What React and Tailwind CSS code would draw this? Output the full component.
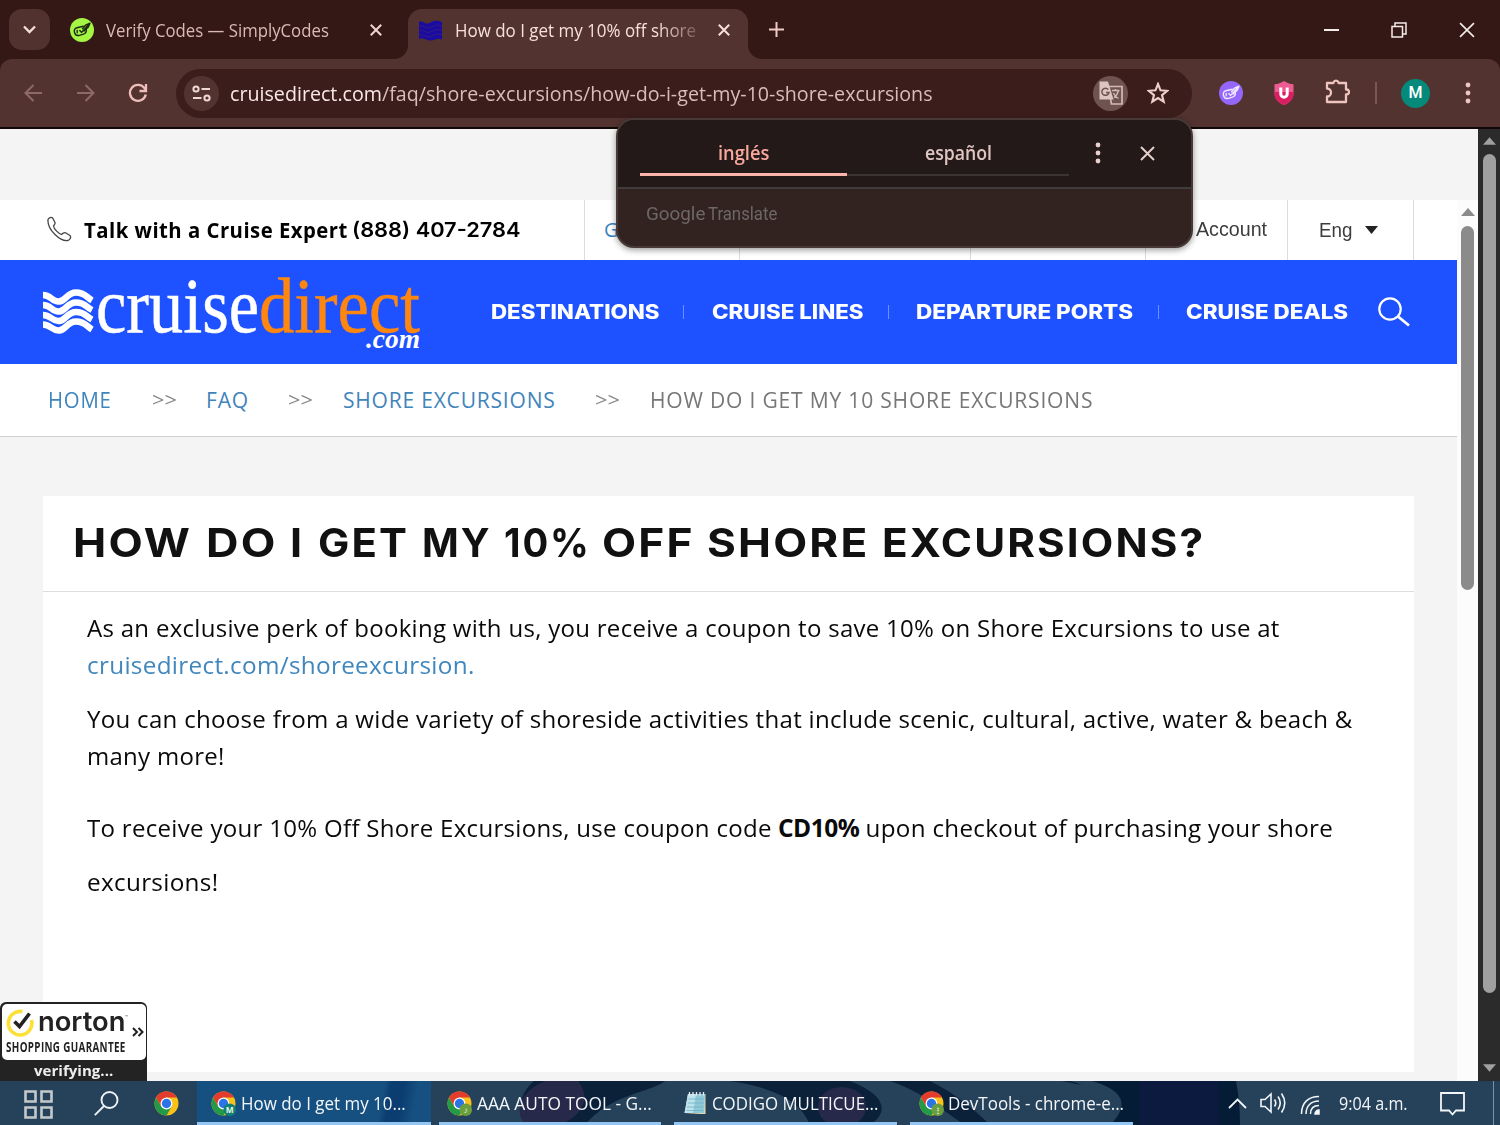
import React, { useLayoutEffect, useRef } from "react";

const UI = "font-['Open_Sans','Noto_Sans',sans-serif]";

/* A single line of text, scaled horizontally to fill the width of its box. */
function Fit({ className = "", children }) {
  const box = useRef(null);
  const text = useRef(null);
  useLayoutEffect(() => {
    const fit = () => {
      const natural = text.current.offsetWidth;
      if (natural) {
        text.current.style.transform = `scaleX(${box.current.clientWidth / natural})`;
      }
    };
    fit();
    document.fonts?.ready.then(fit);
  }, []);
  return (
    <span ref={box} className={`block shrink-0 whitespace-nowrap ${className}`}>
      <span ref={text} className="inline-block origin-left">
        {children}
      </span>
    </span>
  );
}

function Cross({ size, className = "", w = 2 }) {
  return (
    <svg width={size} height={size} viewBox="0 0 12 12" className={`shrink-0 ${className}`} fill="none" stroke="currentColor" strokeWidth={w}>
      <path d="M.8.8 11.2 11.2M11.2.8.8 11.2" />
    </svg>
  );
}

function Dots({ className = "" }) {
  return (
    <svg width="6" height="22" viewBox="0 0 6 22" fill="currentColor" className={`shrink-0 ${className}`}>
      <circle cx="3" cy="3" r="2.4" />
      <circle cx="3" cy="11" r="2.4" />
      <circle cx="3" cy="19" r="2.4" />
    </svg>
  );
}

function SimplyIcon({ bg, fg }) {
  return (
    <svg width="24" height="24" viewBox="0 0 24 24" className="shrink-0" fill="none" stroke={fg} strokeWidth="1.4" strokeLinecap="round" strokeLinejoin="round">
      <circle cx="12" cy="12" r="12" fill={bg} stroke="none" />
      <path d="M13.2 8.2 7 9.700C4.500 10.300 3.900 12.500 4.500 14.500 5.200 17 7 18 9.500 17.400L13.500 16.200C16 15.300 16.600 12.800 16 10.800" />
      <path d="m9.800 12.600 1.800 1.800 6.600-7.400M12.500 10.800 15.500 7.200 20 5.200 18.200 9.200 14 13" />
      <path d="M7.200 12.500v2.300" />
    </svg>
  );
}

function ChromeIcon({ badge, label }) {
  return (
    <svg width="25" height="25" viewBox="0 0 24 24" className="shrink-0">
      <circle cx="12" cy="12" r="11.500" fill="#fbc116" />
      <path d="M2.040 6.250A11.500 11.500 0 0 0 12 23.500L17 14.900 7 14.900z" fill="#229a48" />
      <path d="M2.040 6.250A11.500 11.500 0 0 1 21.960 6.250H12L7 14.900z" fill="#e33b2e" />
      <circle cx="12" cy="12" r="5.700" fill="#fff" />
      <circle cx="12" cy="12" r="4.500" fill="#2a74e8" />
      {badge && <circle cx="18" cy="18" r="6" fill={badge} />}
      {badge && (
        <text x="18" y="21" textAnchor="middle" fontSize="8" fontWeight="700" fill="#e6f5e0" fontFamily="Open Sans">
          {label}
        </text>
      )}
    </svg>
  );
}

function TabStrip() {
  return (
    <div className="flex h-[59px] items-start bg-[#331815]">
      <div className="ml-[9px] mt-[9px] flex h-[41px] w-[41px] shrink-0 items-center justify-center rounded-[13px] bg-[#51322f]">
        <svg width="13" height="9" viewBox="0 0 13 9" fill="none" stroke="#f6dedb" strokeWidth="2.300">
          <path d="M1 1.500 6.500 7 12 1.500" />
        </svg>
      </div>
      <div className="ml-5 flex h-[60px] w-[338px] shrink-0 items-center text-[#dcb9b4]">
        <SimplyIcon bg="#a4f544" fg="#1d2b12" />
        <Fit className="ml-3 w-[223px] text-[18.500px] leading-6">Verify Codes — SimplyCodes</Fit>
        <Cross size={12} className="ml-[41px] text-[#f1d5d1]" />
      </div>
      <div className="relative mt-[9px] flex h-[50px] w-[340px] shrink-0 items-center rounded-t-[14px] bg-[#523330] pb-[8px] text-[#f7dfdc]">
        <svg className="absolute -left-[14px] bottom-0" width="14" height="14">
          <path d="M14 0V14H0A14 14 0 0 0 14 0z" fill="#523330" />
        </svg>
        <svg className="absolute -right-[14px] bottom-0" width="14" height="14">
          <path d="M0 0V14H14A14 14 0 0 1 0 0z" fill="#523330" />
        </svg>
        <svg width="24" height="21" viewBox="0 0 24 21" className="ml-[11px] shrink-0">
          <path d="M0 2C4 0 5 4.500 9 3.500S15-1 23 2V19.500C17 17 16 21 11 20.500S4 17 0 19z" fill="#1a0ca0" />
          <path d="M0 6C6 5 6 9 11 7.500S17 4 23 6M0 10.500C6 9.500 6 13.500 11 12S17 8.500 23 10.500M0 15C6 14 6 18 11 16.500S17 13 23 15" fill="none" stroke="#3a2178" strokeWidth=".8" />
        </svg>
        <Fit className="ml-3 w-[241px] text-[18.500px] leading-6 [mask-image:linear-gradient(90deg,#000_84%,rgba(0,0,0,0.25))]">
          How do I get my 10% off shore
        </Fit>
        <Cross size={12} className="ml-[22px]" />
      </div>
      <svg width="15" height="15" viewBox="0 0 15 15" className="ml-[21px] mt-[22px] shrink-0" stroke="#efc9c4" strokeWidth="2">
        <path d="M7.500 0V15M0 7.500H15" />
      </svg>
      <div className="ml-auto mr-[25px] mt-[22px] flex h-4 items-center text-[#f5ece9]">
        <div className="h-[2px] w-[15px] bg-[#f5ece9]" />
        <svg width="16" height="16" viewBox="0 0 16 16" className="ml-[52px]" fill="none" stroke="currentColor" strokeWidth="1.500">
          <path d="M1 4.500H11.500V15H1zM4 4.500V1H15V12H11.500" />
        </svg>
        <Cross size={16} w={1.2} className="ml-[52px]" />
      </div>
    </div>
  );
}

function Toolbar() {
  return (
    <div className="h-[70px] bg-[#331815]">
      <div className="flex h-full items-center rounded-t-[12px] border-b-2 border-[#100806] bg-[#523330]">
        <svg width="18" height="18" viewBox="0 0 18 18" className="ml-6 shrink-0" fill="none" stroke="#8d6a67" strokeWidth="2">
          <path d="M18 9H2M9.500 1 1.500 9l8 8" />
        </svg>
        <svg width="18" height="18" viewBox="0 0 18 18" className="ml-[35px] shrink-0" fill="none" stroke="#8d6a67" strokeWidth="2">
          <path d="M0 9H16M8.500 1l8 8-8 8" />
        </svg>
        <svg width="20" height="20" viewBox="0 0 20 20" className="ml-[33px] shrink-0" fill="none" stroke="#eebfba" strokeWidth="2.300">
          <path d="M17.800 11.500A8 8 0 1 1 16.500 5.200L18 7" />
          <path d="M18 1v7h-6.500" />
        </svg>
        <div className="ml-[28px] flex h-[49px] w-[1016px] shrink-0 items-center rounded-full bg-[#3b1e1c]">
          <div className="ml-2 flex size-[35px] items-center justify-center rounded-full bg-[#523330]">
            <svg width="19" height="17" viewBox="0 0 19 17" fill="none" stroke="#f0d8d5" strokeWidth="2">
              <circle cx="4" cy="4" r="2.600" />
              <circle cx="15" cy="13" r="2.600" />
              <path d="M9.500 4H18M1 13H9.500" />
            </svg>
          </div>
          <Fit className="ml-[11px] w-[703px] text-[20.500px] leading-7 text-[#d9bdba]">
            <span className="text-[#fbe9e7]">cruisedirect.com</span>/faq/shore-excursions/how-do-i-get-my-10-shore-excursions
          </Fit>
          <div className="ml-[160px] flex size-[35px] shrink-0 items-center justify-center rounded-full bg-[#6f5351]">
            <svg width="26" height="26" viewBox="0 0 26 26">
              <path d="M10 6.500H24V24H13.500z" fill="none" stroke="#d3bab7" strokeWidth="1.700" />
              <path d="M1.500 1.500H10L15.500 19.500H1.500z" fill="#dcc4c1" />
              <path d="M10.300 9.500A3.600 3.600 0 1 0 11 12.500H8" fill="none" stroke="#6f5351" strokeWidth="1.500" />
              <path d="M14 10.500h7.500M17.500 9v1.500M20.500 10.500c-1 4-3 6-4.500 7M15.500 13c1 2.500 3 4.500 5 5.500" fill="none" stroke="#d3bab7" strokeWidth="1.300" />
            </svg>
          </div>
          <svg width="22" height="22" viewBox="0 0 22 22" className="ml-[19px] shrink-0" fill="none" stroke="#f0cfcb" strokeWidth="2.100">
            <path d="m11 2 2.500 6.300 6.700.5-5.200 4.300 1.700 6.600L11 16.100l-5.700 3.600L7 13.100 1.800 8.800l6.700-.5z" />
          </svg>
        </div>
        <div className="ml-[27px] shrink-0">
          <SimplyIcon bg="#9467fa" fg="#efe6ff" />
        </div>
        <svg width="20" height="24" viewBox="0 0 20 24" className="ml-[31px] shrink-0">
          <path d="M10 0C13 2 16 3 19.500 3.200V13C19.500 18 15 22 10 24 5 22 .5 18 .5 13V3.200C4 3 7 2 10 0z" fill="#ee5a92" />
          <path d="M.5 11H19.500V13C19.500 18 15 22 10 24 5 22 .5 18 .5 13z" fill="#d91f62" />
          <path d="M6.800 6.500V13a3.200 3.200 0 0 0 6.400 0V6.500" fill="none" stroke="#fff" strokeWidth="3" />
        </svg>
        <svg width="26" height="26" viewBox="0 0 26 26" className="ml-[30px] mt-[-4px] shrink-0" fill="none" stroke="#efc4bf" strokeWidth="2.300" strokeLinejoin="round">
          <path d="M3 5H9.500V4.500a2.600 2.500 0 0 1 5 0V5H22V11.500h.5a2.500 2.500 0 0 1 0 5H22V24H3V18.500a4 4 0 0 0 0-8z" />
        </svg>
        <div className="ml-[25px] h-[22px] w-[2px] shrink-0 bg-[#7d5552]" />
        <div className="ml-6 flex size-[29px] shrink-0 items-center justify-center rounded-full bg-[#04897b] font-[Roboto,sans-serif] text-[16px] font-medium text-white">
          M
        </div>
        <Dots className="ml-[35px] text-[#efc4bf]" />
      </div>
    </div>
  );
}

function TranslatePopup() {
  return (
    <div className="absolute left-[616px] top-[118px] z-20 h-[130px] w-[577px] overflow-hidden rounded-[18px] border-2 border-[#483936] bg-[#322321] shadow-[0_2px_6px_rgba(0,0,0,0.4)]">
      <div className="flex h-[69px] items-start border-b-2 border-[#403c3e] bg-[#231918] pl-[22px] font-semibold">
        <div className="flex h-[56px] w-[207px] items-center justify-center border-b-[3px] border-[#fbb4aa] pt-[13px] text-[#f9a79c]">
          <Fit className="w-[51px] text-[19px] leading-7">inglés</Fit>
        </div>
        <div className="flex h-[56px] w-[222px] items-center justify-center border-b-2 border-[#3b3334] pt-[12px] text-[#e0c5c1]">
          <Fit className="w-[67px] text-[19px] leading-7">español</Fit>
        </div>
        <Dots className="ml-[26px] mt-[22px] text-[#e8d0cc]" />
        <Cross size={15} w={1.500} className="ml-[39px] mt-[26px] text-[#e8d0cc]" />
      </div>
      <div className="flex pl-7 pt-[13px] font-[Roboto,sans-serif] text-[#6d6766]">
        <Fit className="w-[59px] text-[18.500px] leading-6">Google</Fit>
        <Fit className="ml-[3px] w-[69px] text-[17.500px] leading-6">Translate</Fit>
      </div>
    </div>
  );
}

function TopBar() {
  return (
    <div className="flex h-[60px] w-[1457px] items-stretch bg-white">
      <div className="flex w-[584px] shrink-0 items-center">
        <svg width="26" height="26" viewBox="0 0 26 26" className="mb-[2px] ml-[46px] shrink-0" fill="none" stroke="#444" strokeWidth="1.300" strokeLinejoin="round">
          <path d="M2 3.500C3 1.500 5.500.8 6.800 2.200L9 6.500C9.500 8 8.500 9 7.500 10 8 13 12 17.200 15.500 18.500 17 17 18 16.200 19.500 16.800L24 19.500C25.300 21 24.300 23.500 22 24.500 15 26 1 14 2 3.500z" />
        </svg>
        <div className="ml-3 flex items-center font-bold text-black">
          <Fit className="w-[264px] text-[21px] leading-7 tracking-[0.5px]">Talk with a Cruise Expert</Fit>
          <Fit className="ml-[4px] w-[169px] font-[Inter,sans-serif] text-[20px] font-semibold leading-7">(888) 407-2784</Fit>
        </div>
      </div>
      <div className="flex w-[155px] shrink-0 items-center border-l border-[#dcdcdc] pl-[19px] text-[20px] text-[#3a85c0]">G</div>
      <div className="w-[231px] shrink-0 border-l border-[#dcdcdc]" />
      <div className="w-[175px] shrink-0 border-l border-[#dcdcdc]" />
      <div className="flex w-[142px] shrink-0 items-center justify-end border-l border-[#dcdcdc] pb-[2px] pr-[20px] text-[#3c3c3c]">
        <Fit className="w-[71px] font-['Liberation_Sans',sans-serif] text-[20.500px] leading-7">Account</Fit>
      </div>
      <div className="flex w-[126px] shrink-0 items-center border-l border-[#dcdcdc] pl-[31px] text-[#3c3c3c]">
        <Fit className="w-[33px] font-['Liberation_Sans',sans-serif] text-[20.500px] leading-7">Eng</Fit>
        <svg width="13" height="8" viewBox="0 0 13 8" className="ml-[13px]">
          <path d="M0 0H13L6.500 8z" fill="#222" />
        </svg>
      </div>
      <div className="grow border-l border-[#dcdcdc]" />
    </div>
  );
}

function Logo() {
  return (
    <svg width="380" height="104" viewBox="0 0 380 104" className="ml-[42px] shrink-0 overflow-visible">
      <g fill="none" stroke="#fff" strokeWidth="6.400">
        <path d="M1 35C9 35 10 42 17 41.500S25 32.500 34 32.500 44 37 50 40.500" />
        <path d="M1 45C9 45 10 52 17 51.500S25 42.500 34 42.500 44 47 50 50" />
        <path d="M1 55C9 55 10 61.500 17 61S25 52 34 52 44 56.500 50 59.500" />
        <path d="M1 64.500C9 64.500 10 71 17 70.500S25 61.500 34 61.500 44 66 50 69.500" />
      </g>
      <g fontFamily="Liberation Serif" fontSize="78" strokeWidth=".5">
        <text x="54" y="71.500" textLength="163" lengthAdjust="spacingAndGlyphs" fill="#fff" stroke="#fff">
          cruise
        </text>
        <text x="217" y="71.500" textLength="161" lengthAdjust="spacingAndGlyphs" fill="#ff870f" stroke="#ff870f">
          direct
        </text>
      </g>
      <text x="324" y="88" textLength="54" lengthAdjust="spacingAndGlyphs" fontFamily="Liberation Serif" fontStyle="italic" fontWeight="700" fontSize="28" fill="#fff">
        .com
      </text>
    </svg>
  );
}

function MainNav() {
  const item = "font-[Inter,sans-serif] text-[19.500px] font-extrabold leading-7 text-white";
  const bar = "h-[14px] w-px shrink-0 bg-[#6f90ff]";
  return (
    <div className="flex h-[104px] w-[1457px] items-center bg-[#1e51ff]">
      <Logo />
      <Fit className={`ml-[69px] w-[168px] ${item}`}>DESTINATIONS</Fit>
      <div className={`ml-[24px] ${bar}`} />
      <Fit className={`ml-[28px] w-[151px] ${item}`}>CRUISE LINES</Fit>
      <div className={`ml-[25px] ${bar}`} />
      <Fit className={`ml-[27px] w-[217px] ${item}`}>DEPARTURE PORTS</Fit>
      <div className={`ml-[25px] ${bar}`} />
      <Fit className={`ml-[27px] w-[162px] ${item}`}>CRUISE DEALS</Fit>
      <svg width="32" height="30" viewBox="0 0 32 30" className="ml-[30px] shrink-0" fill="none" stroke="#fff" strokeWidth="2.200">
        <circle cx="12" cy="12" r="10.700" />
        <path d="m20 19.500 11 9" strokeWidth="2.800" />
      </svg>
    </div>
  );
}

function Breadcrumb() {
  const t = "text-[21px] leading-7 tracking-[0.8px]";
  const sep = "w-[25px] text-[20px] leading-7 text-[#888]";
  return (
    <div className="flex h-[73px] w-[1457px] items-center border-b border-[#cfcfcf] bg-white pb-px">
      <Fit className={`ml-[48px] w-[64px] text-[#3f84bb] ${t}`}>HOME</Fit>
      <Fit className={`ml-[40px] ${sep}`}>&gt;&gt;</Fit>
      <Fit className={`ml-[29px] w-[43px] text-[#3f84bb] ${t}`}>FAQ</Fit>
      <Fit className={`ml-[39px] ${sep}`}>&gt;&gt;</Fit>
      <Fit className={`ml-[30px] w-[213px] text-[#3f84bb] ${t}`}>SHORE EXCURSIONS</Fit>
      <Fit className={`ml-[39px] ${sep}`}>&gt;&gt;</Fit>
      <Fit className={`ml-[30px] w-[443px] text-[#777] ${t}`}>HOW DO I GET MY 10 SHORE EXCURSIONS</Fit>
    </div>
  );
}

function Article() {
  return (
    <div className="ml-[43px] mt-[59px] h-[576px] w-[1371px] bg-white">
      <h1 className="flex h-[96px] items-center border-b border-[#dedede] pb-px pl-[30px] font-[Inter,sans-serif] text-[40px] font-bold leading-[50px] tracking-[2px] text-[#111]">
        <Fit className="w-[119px]">HOW</Fit>
        <Fit className="ml-[14px] w-[72px]">DO</Fit>
        <Fit className="ml-[12px] w-[14px]">I</Fit>
        <Fit className="ml-[14px] w-[91px]">GET</Fit>
        <Fit className="ml-[13px] w-[70px]">MY</Fit>
        <Fit className="ml-[12px] w-[87px]">10%</Fit>
        <Fit className="ml-[11px] w-[93px]">OFF</Fit>
        <Fit className="ml-[12px] w-[162px]">SHORE</Fit>
        <Fit className="ml-[13px] w-[323px]">EXCURSIONS?</Fit>
      </h1>
      <div className="pl-[44px] pt-[17px] text-[24.500px] leading-[37px] tracking-[0.300px] text-[#0a0a0a]">
        <Fit className="w-[1193px]">As an exclusive perk of booking with us, you receive a coupon to save 10% on Shore Excursions to use at</Fit>
        <Fit className="w-[388px] text-[#4087be]">cruisedirect.com/shoreexcursion.</Fit>
        <Fit className="mt-[17px] w-[1266px]">
          You can choose from a wide variety of shoreside activities that include scenic, cultural, active, water &amp; beach &amp;
        </Fit>
        <Fit className="w-[138px]">many more!</Fit>
        <div className="mt-[35px] flex">
          <Fit className="w-[691px]">To receive your 10% Off Shore Excursions, use coupon code&nbsp;</Fit>
          <Fit className="w-[81px] font-bold tracking-[-0.500px]">CD10%</Fit>
          <Fit className="w-[474px]">&nbsp;upon checkout of purchasing your shore</Fit>
        </div>
        <Fit className="mt-[17px] w-[131px]">excursions!</Fit>
      </div>
    </div>
  );
}

function InnerScrollbar() {
  return (
    <div className="flex w-[21px] flex-col items-center bg-[#fcfcfc] pt-[8px]">
      <svg width="14" height="8" viewBox="0 0 14 8" className="shrink-0">
        <path d="M7 0 14 8H0z" fill="#8b8b8b" />
      </svg>
      <div className="mt-[10px] h-[364px] w-[13px] shrink-0 rounded-full bg-[#8b8b8b]" />
    </div>
  );
}

function OuterScrollbar() {
  return (
    <div className="flex w-[22px] shrink-0 flex-col items-center bg-[#2b2b2b] pt-[8px]">
      <svg width="13" height="8" viewBox="0 0 14 8" className="shrink-0">
        <path d="M7 0 14 8H0z" fill="#a0a0a0" />
      </svg>
      <div className="mt-[9px] h-[839px] w-[13px] shrink-0 rounded-full bg-[#a0a0a0]" />
      <svg width="13" height="8" viewBox="0 0 14 8" className="mb-[9px] mt-auto shrink-0">
        <path d="M0 0H14L7 8z" fill="#a0a0a0" />
      </svg>
    </div>
  );
}

function NortonBadge() {
  return (
    <div className="absolute bottom-0 left-0 h-[79px] w-[147px] rounded-t-[6px] bg-[#232323] pl-[2px] pr-px pt-[2px]">
      <div className="flex h-[56px] items-center rounded-[5px] bg-white pl-[4px]">
        <div className="w-[121px]">
          <div className="flex items-center">
            <svg width="28" height="28" viewBox="0 0 28 28" className="shrink-0" fill="none">
              <path d="M16.500 2.600A11.800 11.800 0 1 0 25.500 11" stroke="#fbe137" strokeWidth="3.600" />
              <path d="m8.500 12.500 5 5L23.500 4.500" stroke="#222" strokeWidth="3.600" />
            </svg>
            <Fit className="ml-[4px] mt-[-2px] w-[87px] font-[Inter,sans-serif] text-[27px] font-semibold leading-[26px] text-[#222]">norton</Fit>
            <span className="mt-[-12px] text-[4px] leading-3 text-[#555]">™</span>
          </div>
          <Fit className="mt-[2px] w-[120px] text-[13.500px] font-bold leading-[17px] tracking-[0.500px] text-[#222]">SHOPPING GUARANTEE</Fit>
        </div>
        <svg width="12" height="10" viewBox="0 0 12 10" className="ml-[5px] shrink-0" fill="none" stroke="#222" strokeWidth="2">
          <path d="m1 1 4 4-4 4M6.500 1l4 4-4 4" />
        </svg>
      </div>
      <div className="flex h-[21px] items-center justify-center pr-[2px]">
        <Fit className="w-[79px] text-[14.500px] font-bold leading-5 text-[#eee]">verifying...</Fit>
      </div>
    </div>
  );
}

function NotepadIcon() {
  return (
    <svg width="25" height="25" viewBox="0 0 25 25" className="shrink-0">
      <path d="M5 3.500 22.500 3V23H17L2 22z" fill="#e3d7b4" />
      <path d="M5 3H22L21 22H1.500z" fill="#8fc9d8" />
      <path d="M5 3H13L10 22H1.500z" fill="#bfe3eb" />
      <path d="M5.500 8H20.500M5 12H20.500M4 16H20M3.500 19.500H20" stroke="#6db0c4" strokeWidth=".8" />
      <path d="M6.500 1V4.500M10 1V4.500M13.500 1V4.500M17 1V4.500M20.500 1V4.500" stroke="#e9eef0" strokeWidth="1.300" />
    </svg>
  );
}

function Task({ icon, className, children, textClass }) {
  return (
    <div className={`relative flex h-full shrink-0 items-center border-b-[3px] border-[#94c6f3] pt-[4px] ${className}`}>
      {icon}
      <Fit className={`mb-[2px] text-[19px] leading-6 ${textClass}`}>{children}</Fit>
    </div>
  );
}

function Taskbar() {
  return (
    <div className="relative flex h-11 items-center overflow-hidden bg-[#26425a] text-[#f3f6f9]">
      <svg width="1500" height="44" viewBox="0 0 1500 44" className="absolute inset-0">
        <path d="M534 0H665C650 12 610 13 585 44H530C515 30 520 12 534 0z" fill="#0b2039" />
        <path d="M545 0H578C592 18 582 34 560 44H525C512 28 524 8 545 0z" fill="#27294a" />
        <path d="M730 0H850C885 14 890 30 870 44H810C800 18 770 6 730 0z" fill="#0b2039" />
        <ellipse cx="842" cy="26" rx="24" ry="20" fill="#27294a" />
        <path d="M890 0H1070C1100 8 1096 20 1092 44H965C940 28 925 12 890 0z" fill="#0b2039" />
        <path d="M930 0H1062C1100 8 1126 12 1122 20L1110 44H990C970 24 950 10 930 0z" fill="#26425a" />
        <path d="M1092 0H1236Q1240 20 1240 44H1110Q1140 14 1092 0z" fill="#041c35" />
        <path d="M1140 0H1218V44H1140z" fill="#0c1a40" />
      </svg>
      <svg width="30" height="30" viewBox="0 0 30 30" className="relative ml-[24px] mt-[3px] shrink-0" fill="none" stroke="#c4c9cc" strokeWidth="2.600">
        <path d="M1.500 1.500H11.500V11.500H1.500zM17.500 1.500H27.500V11.500H17.500zM1.500 17.500H11.500V27.500H1.500zM17.500 17.500H27.500V27.500H17.500z" />
      </svg>
      <svg width="25" height="25" viewBox="0 0 25 25" className="relative ml-[40px] shrink-0" fill="none" stroke="#eef2f5" strokeWidth="1.900">
        <circle cx="15.500" cy="9" r="8" />
        <path d="M10 15 .8 24.200" />
      </svg>
      <div className="relative ml-[35px] mt-px shrink-0">
        <ChromeIcon />
      </div>
      <Task icon={<ChromeIcon badge="#128074" label="M" />} className="ml-[18px] w-[234px] bg-[linear-gradient(100deg,#155080_78%,#0b3d70_81%,#0b3d70_86%,#155080_92%)] pl-[14px]" textClass="ml-[5px] w-[165px]">
        How do I get my 10...
      </Task>
      <Task icon={<ChromeIcon badge="#6b9f3d" label="♪" />} className="ml-[8px] w-[222px] pl-[8px]" textClass="ml-[5px] w-[175px]">
        AAA AUTO TOOL - G...
      </Task>
      <Task icon={<NotepadIcon />} className="ml-[13px] w-[223px] pl-[9px]" textClass="ml-[4px] w-[166px]">
        CODIGO MULTICUE...
      </Task>
      <Task icon={<ChromeIcon badge="#6b9f3d" label="⋮" />} className="ml-[13px] w-[223px] pl-[9px]" textClass="ml-[4px] w-[176px]">
        DevTools - chrome-e...
      </Task>
      <div className="relative ml-auto flex h-full items-center">
        <svg width="19" height="11" viewBox="0 0 19 11" fill="none" stroke="currentColor" strokeWidth="1.800">
          <path d="m1 10 8.500-8.500L18 10" />
        </svg>
        <svg width="26" height="22" viewBox="0 0 26 22" className="ml-[13px]" fill="none" stroke="currentColor" strokeWidth="1.600">
          <path d="M1 7.500H5L11 2V20L5 14.500H1zM14.500 7.500Q17 11 14.500 14.500M18 4.500Q22.500 11 18 17.500M21.500 1.500Q28 11 21.500 20.500" />
        </svg>
        <svg width="20" height="20" viewBox="0 0 20 20" className="ml-[14px] mt-[3px]" fill="none" stroke="currentColor" strokeWidth="1.500">
          <path d="M1.500 19C1.500 8 8 1.500 19 1.500M6 19C6 11 11 6 19 6M10.500 19C10.500 13.500 13.500 10.500 19 10.500" />
          <path d="M19 15A4 4 0 0 0 15 19H19z" fill="currentColor" />
        </svg>
        <Fit className="ml-[19px] w-[69px] text-[18.500px] leading-6">9:04 a.m.</Fit>
        <svg width="25" height="24" viewBox="0 0 25 24" className="ml-[32px] mt-px" fill="none" stroke="currentColor" strokeWidth="1.800">
          <path d="M1 1H24V18.500H16L12.500 22.500 9 18.500H1z" />
        </svg>
        <div className="ml-[28px] mr-[6px] h-full w-px bg-[#7f919f]" />
      </div>
    </div>
  );
}

export default function App() {
  return (
    <div className={`relative flex h-[1125px] w-[1500px] flex-col overflow-hidden ${UI}`}>
      <TabStrip />
      <Toolbar />
      <TranslatePopup />
      <div className="flex h-[952px] shrink-0">
        <div className="relative w-[1478px] overflow-hidden bg-[#f4f4f4]">
          <div className="h-[71px]" />
          <div className="flex h-[881px]">
            <div className="w-[1457px]">
              <TopBar />
              <MainNav />
              <Breadcrumb />
              <Article />
            </div>
            <InnerScrollbar />
          </div>
          <NortonBadge />
        </div>
        <OuterScrollbar />
      </div>
      <Taskbar />
    </div>
  );
}
